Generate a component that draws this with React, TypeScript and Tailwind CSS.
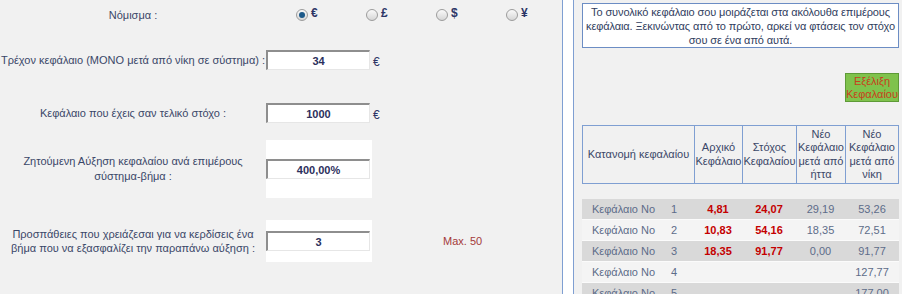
import React from 'react';

const currencies = ['€', '£', '$', '¥'];

const rows = [
  { n: 1, start: '4,81', target: '24,07', loss: '29,19', win: '53,26' },
  { n: 2, start: '10,83', target: '54,16', loss: '18,35', win: '72,51' },
  { n: 3, start: '18,35', target: '91,77', loss: '0,00', win: '91,77' },
  { n: 4, start: '', target: '', loss: '', win: '127,77' },
  { n: 5, start: '', target: '', loss: '', win: '177,00' },
];

const Radio: React.FC<{ checked?: boolean }> = ({ checked }) => (
  <span className="w-[12px] h-[12px] shrink-0 rounded-full border border-[#9c9c9c] bg-gradient-to-b from-[#fafafa] to-[#d6d6d6] flex items-center justify-center">
    {checked && <span className="w-[6px] h-[6px] rounded-full bg-[#1d5a8a]" />}
  </span>
);

const Field: React.FC<{ value: string }> = ({ value }) => (
  <input
    readOnly
    value={value}
    className="w-[104px] h-[20px] shrink-0 bg-white border-t-2 border-l-2 border-b border-r border-t-[#8e8e8e] border-l-[#8e8e8e] border-b-[#e6e6e6] border-r-[#e6e6e6] text-center font-bold text-[11px] text-[#2c2f5c] outline-none"
  />
);

const App: React.FC = () => {
  return (
    <div className="w-[902px] h-[294px] overflow-hidden flex bg-[#f1f1f1] text-[11px] text-[#3a4768] font-['Liberation_Sans',Arial,sans-serif]">
      {/* left panel: form */}
      <div className="w-[563px] shrink-0 border-r border-[#7f9fd2]">
        <div className="flex items-center h-[30px]">
          <div className="w-[266px] shrink-0 text-center">Νόμισμα :</div>
          <div className="flex pl-[30px]">
            {currencies.map((c, i) => (
              <div key={c} className="w-[70px] shrink-0 flex items-center gap-[3px]">
                <Radio checked={i === 0} />
                <span className="text-[12px] font-bold text-[#2c3566] -mt-[4px]">{c}</span>
              </div>
            ))}
          </div>
        </div>

        <div className="flex items-center h-[60px]">
          <div className="w-[266px] shrink-0 text-center">Τρέχον κεφάλαιο (ΜΟΝΟ μετά από νίκη σε σύστημα) :</div>
          <Field value="34" />
          <span className="ml-[3px] mt-[3px] text-[12px] text-[#2c3566]">€</span>
        </div>

        <div className="flex items-center h-[46px]">
          <div className="w-[266px] shrink-0 text-center">Κεφάλαιο που έχεις σαν τελικό στόχο :</div>
          <Field value="1000" />
          <span className="ml-[3px] mt-[3px] text-[12px] text-[#2c3566]">€</span>
        </div>

        <div className="flex items-center h-[58px] mt-[4px]">
          <div className="w-[266px] shrink-0 text-center leading-[15px] px-[20px]">
            Ζητούμενη Αύξηση κεφαλαίου ανά επιμέρους
            <br />
            σύστημα-βήμα :
          </div>
          <div className="w-[106px] h-[58px] shrink-0 bg-white flex items-center">
            <Field value="400,00%" />
          </div>
        </div>

        <div className="flex items-center h-[42px] mt-[22px]">
          <div className="w-[266px] shrink-0 text-center leading-[14px]">
            Προσπάθειες που χρειάζεσαι για να κερδίσεις ένα
            <br />
            βήμα που να εξασφαλίζει την παραπάνω αύξηση :
          </div>
          <div className="w-[106px] h-[42px] shrink-0 bg-white flex items-center">
            <Field value="3" />
          </div>
          <span className="ml-[71px] text-[#a43a3a]">Max. 50</span>
        </div>
      </div>

      <div className="w-[10px] shrink-0 bg-white" />

      {/* right panel: capital split */}
      <div className="flex-1 border-l border-[#7f9fd2] pl-[8px] pr-[3px]">
        <div className="mt-[3px] h-[45px] border border-[#6c8dc4] bg-white text-center leading-[14px] pt-[1px] text-[#303d5e] whitespace-nowrap tracking-[-0.1px] flex flex-col items-center">
          <span>Το συνολικό κεφάλαιο σου μοιράζεται στα ακόλουθα επιμέρους</span>
          <span>κεφάλαια. Ξεκινώντας από το πρώτο, αρκεί να φτάσεις τον στόχο</span>
          <span>σου σε ένα από αυτά.</span>
        </div>

        <div className="flex justify-end mt-[25px]">
          <div className="w-[54px] h-[29px] bg-[#7fc24c] border border-[#5e9a37] text-[#c8401c] text-center leading-[13px] flex flex-col justify-center">
            <span>Εξέλιξη</span>
            <span>Κεφαλαίου</span>
          </div>
        </div>

        <div className="mt-[23px] h-[59px] border border-[#7f9fd2] grid grid-cols-[111px_48px_54px_49px_53px] text-center leading-[13.5px]">
          <div className="flex items-center justify-center">Κατανομή κεφαλαίου</div>
          <div className="border-l border-[#7f9fd2] flex flex-col justify-center whitespace-nowrap">
            <span>Αρχικό</span>
            <span>Κεφάλαιο</span>
          </div>
          <div className="border-l border-[#7f9fd2] flex flex-col justify-center whitespace-nowrap">
            <span>Στόχος</span>
            <span>Κεφαλαίου</span>
          </div>
          <div className="border-l border-[#7f9fd2] flex flex-col justify-center whitespace-nowrap">
            <span>Νέο</span>
            <span>Κεφάλαιο</span>
            <span>μετά από</span>
            <span>ήττα</span>
          </div>
          <div className="border-l border-[#7f9fd2] flex flex-col justify-center whitespace-nowrap">
            <span>Νέο</span>
            <span>Κεφάλαιο</span>
            <span>μετά από</span>
            <span>νίκη</span>
          </div>
        </div>

        <div className="mt-[15px] text-[#5d6c89]">
          {rows.map((r, i) => (
            <div
              key={r.n}
              className={`h-[21px] border-b border-[#fbfbfb] grid grid-cols-[112px_48px_54px_49px_54px] items-center text-center ${
                i % 2 === 0 ? 'bg-[#d9d9d9]' : 'bg-[#f4f4f4]'
              }`}
            >
              <div className="flex pl-[10px] text-left">
                <span className="w-[79px]">Κεφάλαιο Νο</span>
                <span>{r.n}</span>
              </div>
              <div className="font-bold text-[#c40000]">{r.start}</div>
              <div className="font-bold text-[#c40000]">{r.target}</div>
              <div>{r.loss}</div>
              <div>{r.win}</div>
            </div>
          ))}
        </div>
      </div>
    </div>
  );
};

export default App;
